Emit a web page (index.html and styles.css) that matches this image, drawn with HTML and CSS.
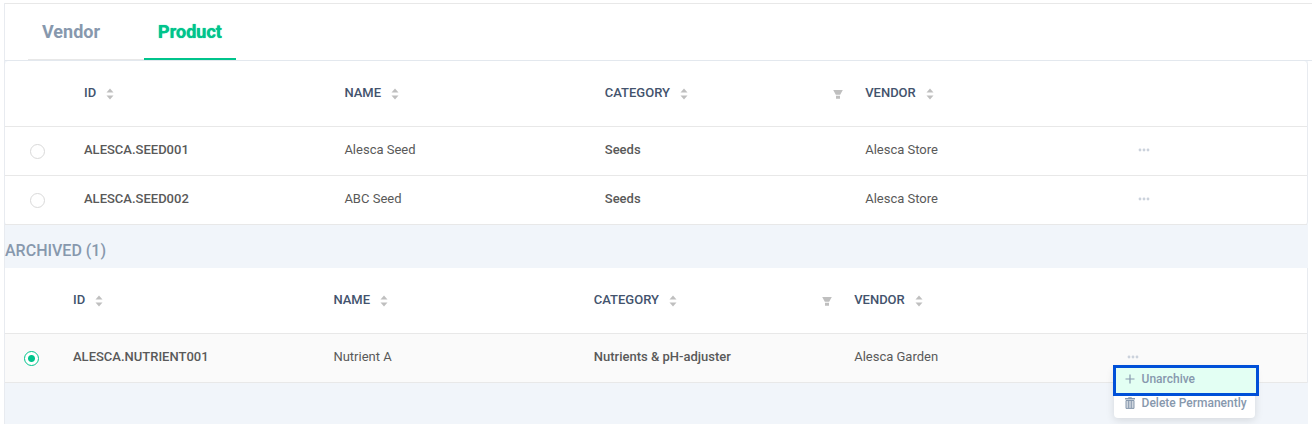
FILE: index.html
```html
<!DOCTYPE html>
<html lang="en">
<head>
  <meta charset="UTF-8">
  <title>Products</title>
  <meta name="viewport" content="width=device-width, initial-scale=1.0">
  <link rel="stylesheet" href="styles.css">
</head>
<body>

  <!-- shared icons -->
  <svg class="sprite" aria-hidden="true">
    <symbol id="sort" viewBox="0 0 8 12">
      <path d="M4 0.5L7.5 4.5H0.5zM4 11.5L0.5 7.5H7.5z"/>
    </symbol>
    <symbol id="filter" viewBox="0 0 10 10">
      <path d="M0.2 1H9.8L7.2 5.8H2.8zM3 6.8H7V9.8H3z"/>
    </symbol>
    <symbol id="dots" viewBox="0 0 12 4">
      <circle cx="2" cy="2" r="1.4"/><circle cx="6" cy="2" r="1.4"/><circle cx="10" cy="2" r="1.4"/>
    </symbol>
  </svg>

  <main class="panel">
    <nav class="tabs">
      <a class="tab" href="#vendor">Vendor</a>
      <a class="tab active" href="#product">Product</a>
    </nav>

    <div class="card">
      <table>
        <colgroup>
          <col class="col-select"><col class="col-data"><col class="col-data"><col class="col-data"><col class="col-data"><col>
        </colgroup>
        <thead>
          <tr>
            <th></th>
            <th><button class="sort">ID <svg><use href="#sort"/></svg></button></th>
            <th><button class="sort">NAME <svg><use href="#sort"/></svg></button></th>
            <th>
              <div class="head">
                <button class="sort">CATEGORY <svg><use href="#sort"/></svg></button>
                <button class="filter" aria-label="Filter category"><svg><use href="#filter"/></svg></button>
              </div>
            </th>
            <th><button class="sort">VENDOR <svg><use href="#sort"/></svg></button></th>
            <th></th>
          </tr>
        </thead>
        <tbody>
          <tr>
            <td class="select"><input type="radio" name="product" aria-label="Select ALESCA.SEED001"></td>
            <td class="strong">ALESCA.SEED001</td>
            <td>Alesca Seed</td>
            <td class="strong">Seeds</td>
            <td>Alesca Store</td>
            <td><button class="more" aria-label="More"><svg><use href="#dots"/></svg></button></td>
          </tr>
          <tr>
            <td class="select"><input type="radio" name="product" aria-label="Select ALESCA.SEED002"></td>
            <td class="strong">ALESCA.SEED002</td>
            <td>ABC Seed</td>
            <td class="strong">Seeds</td>
            <td>Alesca Store</td>
            <td><button class="more" aria-label="More"><svg><use href="#dots"/></svg></button></td>
          </tr>
        </tbody>
      </table>
    </div>

    <h2>ARCHIVED (1)</h2>

    <div class="card archived">
      <table>
        <colgroup>
          <col class="col-select"><col class="col-data"><col class="col-data"><col class="col-data"><col class="col-data"><col>
        </colgroup>
        <thead>
          <tr>
            <th></th>
            <th><button class="sort">ID <svg><use href="#sort"/></svg></button></th>
            <th><button class="sort">NAME <svg><use href="#sort"/></svg></button></th>
            <th>
              <div class="head">
                <button class="sort">CATEGORY <svg><use href="#sort"/></svg></button>
                <button class="filter" aria-label="Filter category"><svg><use href="#filter"/></svg></button>
              </div>
            </th>
            <th><button class="sort">VENDOR <svg><use href="#sort"/></svg></button></th>
            <th></th>
          </tr>
        </thead>
        <tbody>
          <tr class="selected">
            <td class="select"><input type="radio" name="archived" aria-label="Select ALESCA.NUTRIENT001" checked></td>
            <td class="strong">ALESCA.NUTRIENT001</td>
            <td>Nutrient A</td>
            <td class="strong">Nutrients &amp; pH-adjuster</td>
            <td>Alesca Garden</td>
            <td>
              <div class="actions">
                <button class="more" aria-label="More"><svg><use href="#dots"/></svg></button>
                <div class="menu">
                  <button class="item current">
                    <svg viewBox="0 0 12 12"><path d="M6 1.5V10.5M1.5 6H10.5" fill="none" stroke="currentColor" stroke-width="1.2"/></svg>
                    Unarchive
                  </button>
                  <button class="item">
                    <svg viewBox="0 0 12 12"><path d="M1 1H4L4.5 0.3H7.5L8 1H11V2.6H1z" fill="currentColor"/><path d="M2 3.5H10V11.4H2z" fill="currentColor" fill-opacity="0.4"/><path d="M2 3.5H10V11.4H2zM4.7 4V11M7.3 4V11" fill="none" stroke="currentColor"/></svg>
                    Delete Permanently
                  </button>
                </div>
              </div>
            </td>
          </tr>
        </tbody>
      </table>
    </div>
  </main>

</body>
</html>
```

FILE: styles.css
```css
* {
  box-sizing: border-box;
}

body {
  margin: 0;
  padding: 3px 0 0 4px;
  background: #fff;
  color: #595959;
  font-family: Roboto, sans-serif;
  font-size: 13px;
  line-height: 20px;
}

button {
  padding: 0;
  border: none;
  background: none;
  color: inherit;
  font: inherit;
  cursor: pointer;
}

.sprite {
  position: absolute;
  width: 0;
  height: 0;
}

.panel {
  min-height: calc(100vh - 3px);
  border-left: 1px solid #e8ebf0;
  background: linear-gradient(#f1f5fa, #f1f5fa) no-repeat 0 58px;
  background-size: calc(100% - 4px) 100%;
}

.tabs {
  display: flex;
  height: 58px;
  padding-left: 23px;
  border-top: 1px solid #e8e8e8;
  border-bottom: 1px solid #e3e8ee;
  background: #fff;
}

.tab {
  padding: 18px 14px 0;
  border-bottom: 1px solid #e8e8e8;
  color: #8798ad;
  font-size: 18px;
  font-weight: bold;
  text-decoration: none;
}

.tab:first-child {
  padding-right: 44px;
}

.tab.active {
  border-bottom: 2px solid #00c48c;
  color: #00c48c;
  text-shadow: 0 0 1px currentColor;
}

.card {
  margin-right: 4px;
  border-right: 1px solid #e8ebf0;
  border-radius: 4px;
  background: #fff;
}

.archived {
  border-radius: 0;
}

table {
  width: 100%;
  border-collapse: separate;
  border-spacing: 0;
  table-layout: fixed;
}

.col-select {
  width: 64px;
}

.archived .col-select {
  width: 53px;
}

.col-data {
  width: 20%;
}

th, td {
  height: 49px;
  padding: 0 15px 2px;
  border-bottom: 1px solid #e8e8e8;
  text-align: left;
}

th {
  height: 66px;
  padding-right: 7px;
  color: #43536d;
  font-weight: 500;
}

.strong {
  font-weight: 500;
}

.selected td {
  background: #fafafa;
}

td.select {
  padding: 0;
  text-align: center;
}

input[type="radio"] {
  appearance: none;
  display: block;
  width: 15px;
  height: 15px;
  margin: 0 auto;
  border: 1px solid #d9d9d9;
  border-radius: 50%;
  background: #fff;
}

input[type="radio"]:checked {
  border-color: #00c48c;
  background: radial-gradient(#00c48c 3px, #fff 4px);
}

.head {
  display: flex;
  justify-content: space-between;
}

.sort {
  display: flex;
  align-items: center;
  gap: 10px;
}

.sort svg {
  width: 8px;
  height: 12px;
  margin-top: 2px;
  fill: #bfbfbf;
}

.filter {
  padding-top: 3px;
}

.filter svg {
  display: block;
  width: 10px;
  height: 10px;
  fill: #bfbfbf;
}

.more svg {
  display: block;
  width: 12px;
  height: 4px;
  fill: #cbd2dc;
}

.more {
  display: block;
  margin-left: 12px;
}

.actions {
  position: relative;
}

/* opens below the row actions */
.menu {
  position: absolute;
  top: 10px;
  left: -2px;
  width: 146px;
  padding-bottom: 8px;
}

.menu::before {
  content: "";
  position: absolute;
  inset: 3px 4px 0 1px;
  border-radius: 4px;
  background: #fff;
  box-shadow: 0 2px 8px rgba(0, 0, 0, 0.12);
}

.item {
  position: relative;
  display: flex;
  align-items: center;
  gap: 6px;
  width: 100%;
  height: 14px;
  padding-left: 11px;
  color: #8798ad;
  font-size: 12px;
  font-weight: 500;
  white-space: nowrap;
}

.item svg {
  width: 12px;
  height: 12px;
}

.item.current {
  height: 31px;
  padding: 0 0 3px 8px;
  border: 3px solid #0050d8;
  background: #e3fff3;
}

h2 {
  margin: 0;
  padding: 16px 0 7px;
  color: #8798ad;
  font-size: 16px;
  font-weight: 500;
}
```
